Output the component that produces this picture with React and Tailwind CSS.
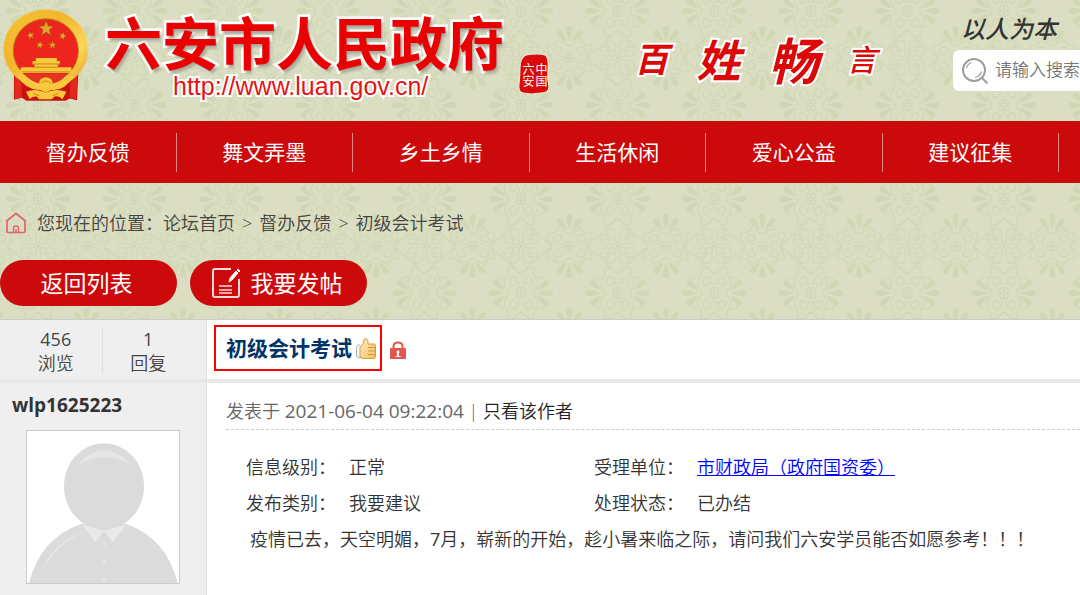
import React from 'react';

const NAV_ITEMS = ['督办反馈', '舞文弄墨', '乡土乡情', '生活休闲', '爱心公益', '建议征集'];

const CRUMBS = ['论坛首页', '督办反馈', '初级会计考试'];

// one quarter of the curl ornament, mirrored around its centre
const Mirrored = ({ children }) => (
  <>
    <g>{children}</g>
    <g transform="scale(-1 1)">{children}</g>
    <g transform="scale(1 -1)">{children}</g>
    <g transform="scale(-1 -1)">{children}</g>
  </>
);

const Flower = () => (
  <Mirrored>
    <path d="M0 2C4 1 6-3 3-5S-1-3 1-1M1-8C4-10 3-15 6-16S12-14 11-10 5-7 5-11M13-16C18-13 17-6 14-4L12 0" fill="none" strokeWidth="1.2" />
    <path d="M16-4L22-11q3-3 5-1t-1 5L18-3z" stroke="none" />
    <path d="M16 0.500L24-2.500 29-3q3 0 3 3.500z" stroke="none" />
  </Mirrored>
);

const Medallion = () => (
  <Mirrored>
    <circle cx="5" cy="-5" r="3.500" fill="none" strokeWidth="1.200" />
    <path d="M0-2V0H2M9-2H12Q17-2 17-7T12-11 10-8 13-7M2-9V-12Q2-17 7-17T11-13 8-11M0-28L16-13M16-13L31 0M1-28q4 7 12 7v-5q-1-4 4-5l5-1q3-3 1-5M31-2q-5-5-5-11h5q4 0 5-5l4-3" fill="none" strokeWidth="1.200" />
  </Mirrored>
);

const Damask = () => (
  <svg className="absolute inset-0 h-full w-full" aria-hidden="true">
    <defs>
      <pattern id="damask" x="38" y="11" width="96.6" height="94" patternUnits="userSpaceOnUse">
        <g fill="#d1d7b2" stroke="#d1d7b2">
          <Flower />
          <g transform="translate(96.6 0)"><Flower /></g>
          <g transform="translate(0 94)"><Flower /></g>
          <g transform="translate(96.6 94)"><Flower /></g>
          <g transform="translate(0 47)"><Medallion /></g>
          <g transform="translate(96.6 47)"><Medallion /></g>
          <g transform="translate(48.3 47) rotate(90)"><Flower /></g>
        </g>
      </pattern>
    </defs>
    <rect width="100%" height="100%" fill="url(#damask)" />
  </svg>
);

const STAR = 'M0-10L2.4-3.2 9.5-3.1 3.8 1.2 5.9 8.1 0 4-5.9 8.1-3.8 1.2-9.5-3.1-2.4-3.2z';

const Emblem = () => (
  <svg viewBox="0 0 280 312" className="h-[104px] w-[93px] shrink-0" aria-hidden="true">
    <defs>
      <linearGradient id="gold" x1="0" y1="0" x2="1" y2="1">
        <stop offset="0" stopColor="#f6c438" />
        <stop offset=".4" stopColor="#f3b62c" />
        <stop offset=".7" stopColor="#fbd75a" />
        <stop offset="1" stopColor="#e39a1d" />
      </linearGradient>
    </defs>
    <path d="M42 215l32 30h128l34-32-4 88-22-5-12 7H80l-14-9-24 6z" fill="#c8120f" />
    <path d="M44 226l20 22 2 44-22 6zM232 226l-20 22-2 44 20 6z" fill="#e32a1c" />
    <ellipse cx="138" cy="147" rx="128" ry="119" fill="url(#gold)" />
    <ellipse cx="138" cy="147" rx="120" ry="111" fill="none" stroke="#d9951d" strokeWidth="3" strokeDasharray="7 6" opacity=".3" />
    <ellipse cx="138" cy="152" rx="98" ry="96" fill="#ee251d" stroke="#b97a17" strokeWidth="3" />
    <g fill="#e5a52a" stroke="#8b4b12" strokeWidth=".6">
      <path d={STAR} transform="translate(139 86) scale(2.5)" />
      <path d={STAR} transform="translate(92 106) rotate(-15) scale(1.25)" />
      <path d={STAR} transform="translate(189 108) rotate(15) scale(1.25)" />
      <path d={STAR} transform="translate(120 135) rotate(8) scale(1.25)" />
      <path d={STAR} transform="translate(158 135) scale(1.25)" />
    </g>
    <g fill="#f9c83b">
      <path d="M108 174h63v9h9v10H98v-10h10zM104 193h70v9h-70zM64 202h151v17H58z" />
      <path d="M78 222h120q-8 26-60 32-50-6-60-32z" fill="#e33420" />
      <path d="M118 252q-2-18 20-20 22 2 20 20l-20 12z" />
      <path d="M66 222q24 34 56 34l16 6 16-6q32 0 56-34l12 8q-28 44-66 40l-18 8-18-8Q80 272 52 230z" />
      <path d="M78 276q30-12 60 2 30-14 62-2l-12 22q-10-12-24-8l-8 8h-38l-8-8q-14-2-20 8z" />
    </g>
    <path d="M104 202h70M98 192h82M66 216h146M124 250q14-14 28 0M100 280l18 8M176 280l-18 8" fill="none" stroke="#cc861c" strokeWidth="3" />
  </svg>
);

const Seal = () => (
  <div className="relative mt-[54px] ml-3.5 h-[41px] w-8 shrink-0">
    <svg viewBox="0 0 32 41" className="absolute inset-0 h-full w-full" aria-hidden="true">
      <path d="M8 1Q20-1 27 1q4 3 3 14t1 18q-1 6-8 6-10 2-18 0-5-1-4-9T2 14Q2 4 8 1z" fill="#d90b0b" stroke="#f3eee0" strokeWidth="1" />
    </svg>
    <p className="relative ml-0.5 flex h-full w-7 items-center justify-center text-xs leading-[13px] text-white [writing-mode:vertical-rl]">
      <span>
        中国
        <br />
        六安
      </span>
    </p>
  </div>
);

const SearchIcon = () => (
  <svg viewBox="0 0 28 28" className="h-7 w-7 shrink-0" fill="none" stroke="#a29c9c" aria-hidden="true">
    <circle cx="13" cy="13" r="11" strokeWidth="2" />
    <path d="M20.500 20.500l6 6" strokeWidth="2" />
    <path d="M5.500 11q1-4 5-5.500M14 20.500q5-1 6.500-6" strokeWidth="1.200" />
  </svg>
);

const HouseIcon = () => (
  <svg viewBox="0 0 22 22" className="h-[22px] w-[22px] shrink-0" fill="none" stroke="#e0666a" strokeWidth="1.700" strokeLinejoin="round" aria-hidden="true">
    <path d="M1 9.500L11 1.500l10 8M2 9v10q0 1.500 1.500 1.500h15q1.500 0 1.500-1.500V9" />
    <path d="M8.500 20v-4q0-2 2.500-2t2.500 2v4M11 17v3" strokeWidth="1.400" />
  </svg>
);

const WriteIcon = () => (
  <svg viewBox="0 0 30 32" className="h-8 w-[30px] shrink-0" fill="none" stroke="#fbdada" strokeWidth="2" aria-hidden="true">
    <path d="M20 2H4Q2 2 2 4v24q0 2 2 2h22q2 0 2-2V12" />
    <path d="M8 19h13M8 23h13M8 26h13" strokeWidth="1.600" />
    <path d="M18 15l1-4 6-7 2 2-6 7zM26 3l1-1 2 2-1 1z" fill="#fff" stroke="#fff" strokeWidth="1" />
  </svg>
);

const ThumbIcon = () => (
  <svg viewBox="0 0 20 22" className="h-[22px] w-5 shrink-0" aria-hidden="true">
    <defs>
      <linearGradient id="thumb" x1="0" y1="0" x2="1" y2="1">
        <stop offset="0" stopColor="#fff0c4" />
        <stop offset="1" stopColor="#f3bd5b" />
      </linearGradient>
    </defs>
    <path d="M4 7H2.500Q.6 7 .6 9v8q0 2.500 2 2.500H5" fill="#f5f7fb" stroke="#a9b0bd" />
    <path d="M4 9q4-2 4-7 0-1.500 1.500-1.500T12 3v3h6q1.500 0 1.500 1.500v11q0 2-2 2H7Q4 20 4 18z" fill="url(#thumb)" stroke="#d79a3b" />
    <path d="M12 9.500h7M12 13h7M12 16.500h7" stroke="#d79a3b" />
  </svg>
);

const LockIcon = () => (
  <svg viewBox="0 0 16 18" className="h-[18px] w-4 shrink-0" aria-hidden="true">
    <path d="M3.500 9V5.500q0-4 4.500-4t4.500 4V9" fill="none" stroke="#e4574f" strokeWidth="2" />
    <rect y="7" width="16" height="11" rx="1" fill="#e4574f" />
    <path d="M8 9.500a1.500 1.500 0 0 1 1 2.600V15h1.500v1h-5v-1H7v-2.900A1.500 1.500 0 0 1 8 9.500z" fill="#fff" />
  </svg>
);

const Avatar = () => (
  <svg viewBox="0 0 462 462" className="block h-auto w-full" role="img" aria-label="wlp1625223">
    <rect width="462" height="462" fill="#fff" />
    <path d="M6 462Q40 325 168 281h130q126 44 160 181z" fill="#dbdbdb" />
    <ellipse cx="234" cy="168" rx="122" ry="131" fill="#dbdbdb" />
    <path d="M153 103q80-88 165 0-85-48-165 0z" fill="#e6e6e6" />
    <path d="M36 440Q80 330 176 306 90 340 36 440z" fill="#e4e4e4" />
    <path d="M166 283l68 20-26 36zM304 283l-70 20 26 36z" fill="#e9e9e9" />
    <g fill="#e6e6e6">
      <circle cx="235" cy="344" r="5" />
      <circle cx="235" cy="397" r="5" />
      <circle cx="235" cy="451" r="5" />
    </g>
  </svg>
);

const Stat = ({ value, label }) => (
  <div className="flex-1 text-center leading-6">
    <p className="font-normal">{value}</p>
    <p>{label}</p>
  </div>
);

const Field = ({ label, children }) => (
  <div className="flex">
    <dt className="w-[103px] shrink-0">{label}：</dt>
    <dd>{children}</dd>
  </div>
);

const App = () => {
  return (
    <div className="flex min-h-screen flex-col overflow-hidden bg-white font-['Open_Sans','Noto_Sans_CJK_SC',sans-serif] text-lg text-[#333]">
      <div className="relative bg-[#dbdec3]">
        <Damask />

        <div className="relative">
          <header className="flex h-[121px] items-start">
            <Emblem />
            <a href="#home" className="ml-3 shrink-0 pt-2">
              <h1 className="font-['Noto_Sans_CJK_SC',sans-serif] text-[57px] font-bold leading-[64px] text-[#ea0000] [-webkit-text-stroke:5px_white] [paint-order:stroke_fill] [text-shadow:2px_3px_3px_#a3a494]">
                六安市人民政府
              </h1>
              <p className="pt-0.5 pl-[68px] font-['Liberation_Sans',sans-serif] text-[25px] leading-6 text-[#e31515] [-webkit-text-stroke:4px_white] [paint-order:stroke_fill]">
                http://www.luan.gov.cn/
              </p>
            </a>
            <Seal />

            <p className="mx-auto flex h-[116px] items-center gap-7 pl-2 font-['Noto_Sans_CJK_SC',sans-serif] text-[44px] font-bold italic leading-none text-[#dc0808] [-webkit-text-stroke:4px_white] [paint-order:stroke_fill]">
              <span className="text-[34px]">百</span>
              <span>姓</span>
              <span className="text-[50px]">畅</span>
              <span className="text-[30px] font-medium">言</span>
            </p>

            <div className="w-[127px] shrink-0 pt-4">
              <p className="pl-2 font-['Noto_Sans_CJK_SC',sans-serif] text-2xl font-medium italic leading-6 text-[#333]">以人为本</p>
              <label className="mt-2.5 flex h-[41px] items-center gap-1.5 rounded-l-md bg-white pl-2">
                <SearchIcon />
                <input
                  type="text"
                  aria-label="搜索"
                  placeholder="请输入搜索"
                  className="w-full min-w-0 bg-transparent text-[17px] font-[350] outline-none placeholder:text-[#757575]"
                />
              </label>
            </div>
          </header>

          <nav className="flex h-[62px] items-center bg-[#cc0a0c] pr-[21px]">
            {NAV_ITEMS.map((item) => (
              <a key={item} href="#board" className="flex h-[39px] flex-1 items-center justify-center border-r border-[#e58585] text-[21px] text-white">
                {item}
              </a>
            ))}
          </nav>

          <div className="flex items-center gap-2.5 px-[5px] pt-6 leading-8">
            <HouseIcon />
            <p className="font-[350] text-[#444]">
              您现在的位置：
              {CRUMBS.map((crumb, i) => (
                <React.Fragment key={crumb}>
                  {i > 0 && <span className="px-[7px]">&gt;</span>}
                  <a href="#crumb">{crumb}</a>
                </React.Fragment>
              ))}
            </p>
          </div>

          <div className="flex gap-[13px] pt-[21px] pb-[13px] text-[23px] text-white">
            <button type="button" className="h-[46px] w-[177px] rounded-full bg-[#cc0a0c] pt-0.5 pr-1">返回列表</button>
            <button type="button" className="flex h-[46px] w-[177px] items-center justify-center gap-2.5 rounded-full bg-[#cc0a0c] pr-1">
              <WriteIcon />
              <span className="pt-0.5">我要发帖</span>
            </button>
          </div>
        </div>
      </div>

      <main className="flex flex-1 border-t border-[#ccc]">
        <aside className="w-[207px] shrink-0 border-r border-[#e2e2e2] bg-[#efefef]">
          <div className="flex h-[63px] items-center border-b-4 border-[#e8e8e8] pt-0.5 pr-3 pl-2.5 font-[350] text-[#444]">
            <Stat value="456" label="浏览" />
            <div className="h-[47px] w-px bg-[#dedede]" />
            <Stat value="1" label="回复" />
          </div>
          <p className="px-3 pt-2 text-[19px] font-bold leading-7 text-[#333]">wlp1625223</p>
          <div className="mx-[26px] mt-[11px] border border-[#ccc]">
            <Avatar />
          </div>
        </aside>

        <article className="min-w-0 flex-1">
          <div className="flex h-[63px] items-center gap-2 border-b-4 border-[#e8e8e8] pl-[7px]">
            <h2 className="mb-1 flex h-[46px] items-center gap-1 border-2 border-[#f80000] pt-0.5 pr-1 pl-2.5 text-[21px] font-bold text-[#036]">
              初级会计考试
              <ThumbIcon />
            </h2>
            <LockIcon />
          </div>

          <div className="pl-[19px]">
            <p className="border-b border-dashed border-[#ccc] pt-3 pb-0.5 font-[350] leading-8 text-[#666]">
              发表于 <span className="text-[19px] font-normal">2021-06-04 09:22:04</span> |{' '}
              <a href="#author" className="text-[#222]">只看该作者</a>
            </p>
            <div className="px-5 pt-[19px] font-[350] leading-9">
              <dl className="grid grid-cols-[348px_1fr]">
                <Field label="信息级别">正常</Field>
                <Field label="受理单位">
                  <a href="#unit" className="text-[#00f] underline">市财政局（政府国资委）</a>
                </Field>
                <Field label="发布类别">我要建议</Field>
                <Field label="处理状态">已办结</Field>
              </dl>
              <p className="pl-1">
                疫情已去，天空明媚，<span className="font-normal">7</span>月，崭新的开始，趁小暑来临之际，请问我们六安学员能否如愿参考！！！
              </p>
            </div>
          </div>
        </article>
      </main>
    </div>
  );
};

export default App;
